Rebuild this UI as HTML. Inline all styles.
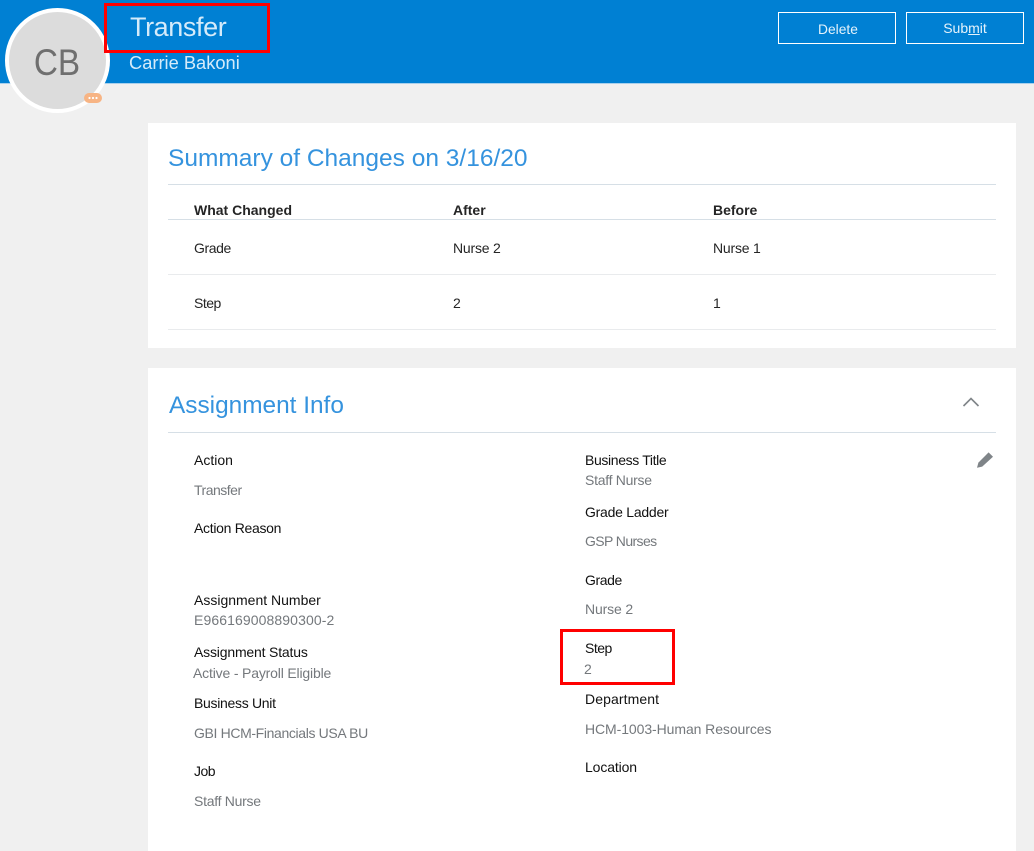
<!DOCTYPE html>
<html><head><meta charset="utf-8">
<style>
html,body{margin:0;padding:0}
body{width:1034px;height:851px;overflow:hidden;position:relative;background:#f0f0f0;font-family:"Liberation Sans",sans-serif;font-size:14px;color:#252525}
.a{position:absolute;white-space:nowrap;line-height:20px}
.box{position:absolute}
.v{color:#74787c}
.l{color:#111}
.hr{position:absolute;height:1px;background:#d6dfe6}
.hr2{position:absolute;height:1px;background:#e9ebed}
.btn{position:absolute;top:12px;width:116px;height:30px;border:1px solid #fff;line-height:33px;text-align:center;color:#e4f2fb;font-size:14px;box-sizing:content-box}
.rb{position:absolute;border:3px solid #f00;box-sizing:border-box}
h2{position:absolute;margin:0;font-weight:normal;line-height:32px;color:#3593de;white-space:nowrap}
</style></head><body>
<div class="box" style="left:0;top:0;width:1034px;height:83px;background:#0080d3;border-bottom:1px solid #a9d0ec"></div>
<div class="box" style="left:5px;top:8px;width:105px;height:105px;border-radius:50%;background:#dcdcdc;border:4px solid #fff;box-sizing:border-box"></div>
<div class="a" style="left:5px;top:41px;width:104px;text-align:center;font-size:37px;line-height:44px;color:#6f6f6f;transform:scaleX(.9)">CB</div>
<div class="box" style="left:84px;top:93px;width:18px;height:10px;border-radius:5px;background:#f7b484"></div>
<svg class="box" style="left:84px;top:93px" width="18" height="10"><circle cx="5.5" cy="5" r="1.1" fill="#fff"/><circle cx="9" cy="5" r="1.1" fill="#fff"/><circle cx="12.5" cy="5" r="1.1" fill="#fff"/></svg>
<div class="a" style="left:130px;top:10px;font-size:27px;line-height:34px;color:#d5ebfa;letter-spacing:-.4px">Transfer</div>
<div class="a" style="left:129px;top:51px;font-size:18.3px;line-height:24px;color:#d5ebfa">Carrie Bakoni</div>
<div class="rb" style="left:104px;top:3px;width:166px;height:50px"></div>
<div class="btn" style="left:778px"><span style="font-size:13.8px;position:relative;left:1px">Delete</span></div>
<div class="btn" style="left:906px"><span style="position:relative;top:-1px;left:0">Sub<u>m</u>it</span></div>

<div class="box" style="left:148px;top:123px;width:868px;height:225px;background:#fff"></div>
<h2 style="left:168px;top:143px;font-size:24.5px">Summary of Changes on 3/16/20</h2>
<div class="hr" style="left:168px;top:184px;width:828px"></div>
<div class="a" style="left:194px;top:200px;font-weight:bold">What Changed</div>
<div class="a" style="left:453px;top:200px;font-weight:bold">After</div>
<div class="a" style="left:713px;top:200px;font-weight:bold">Before</div>
<div class="hr" style="left:168px;top:219px;width:828px"></div>
<div class="a" style="left:194px;top:238px;letter-spacing:-.4px">Grade</div>
<div class="a" style="left:453px;top:238px;letter-spacing:-.2px">Nurse 2</div>
<div class="a" style="left:713px;top:238px;letter-spacing:-.2px">Nurse 1</div>
<div class="hr2" style="left:168px;top:274px;width:828px"></div>
<div class="a" style="left:194px;top:293px;letter-spacing:-.5px">Step</div>
<div class="a" style="left:453px;top:293px">2</div>
<div class="a" style="left:713px;top:293px">1</div>
<div class="hr2" style="left:168px;top:329px;width:828px"></div>

<div class="box" style="left:148px;top:368px;width:868px;height:483px;background:#fff"></div>
<h2 style="left:169px;top:390px;font-size:24.4px">Assignment Info</h2>
<svg class="box" style="left:960px;top:394px" width="22" height="16"><path d="M3.5 12 L11 4.5 L18.5 12" fill="none" stroke="#7f8488" stroke-width="1.6"/></svg>
<div class="hr" style="left:168px;top:432px;width:828px"></div>
<svg class="box" style="left:976px;top:451px" width="18" height="18"><path d="M1 16.8 L2.4 11.6 L12.6 1.4 L17 5.8 L6.2 15.6 Z" fill="#7f8488"/></svg>

<div class="a l" style="left:194px;top:450px">Action</div>
<div class="a v" style="left:194px;top:480px;letter-spacing:-.5px">Transfer</div>
<div class="a l" style="left:194px;top:518px;letter-spacing:-.3px">Action Reason</div>
<div class="a l" style="left:194px;top:590px">Assignment Number</div>
<div class="a v" style="left:194px;top:610px;letter-spacing:.1px">E966169008890300-2</div>
<div class="a l" style="left:194px;top:642px;letter-spacing:-.18px">Assignment Status</div>
<div class="a v" style="left:193px;top:663px;letter-spacing:-.17px">Active - Payroll Eligible</div>
<div class="a l" style="left:194px;top:693px;letter-spacing:-.3px">Business Unit</div>
<div class="a v" style="left:194px;top:723px;letter-spacing:-.36px">GBI HCM-Financials USA BU</div>
<div class="a l" style="left:194px;top:761px;letter-spacing:-.5px">Job</div>
<div class="a v" style="left:194px;top:791px;letter-spacing:-.27px">Staff Nurse</div>

<div class="a l" style="left:585px;top:450px;letter-spacing:-.36px">Business Title</div>
<div class="a v" style="left:585px;top:470px;letter-spacing:-.27px">Staff Nurse</div>
<div class="a l" style="left:585px;top:502px;letter-spacing:-.25px">Grade Ladder</div>
<div class="a v" style="left:585px;top:531px;letter-spacing:-.6px">GSP Nurses</div>
<div class="a l" style="left:585px;top:570px;letter-spacing:-.4px">Grade</div>
<div class="a v" style="left:585px;top:599px;letter-spacing:-.15px">Nurse 2</div>
<div class="a l" style="left:585px;top:638px;letter-spacing:-.5px">Step</div>
<div class="a v" style="left:584px;top:659px">2</div>
<div class="rb" style="left:560px;top:629px;width:115px;height:56px"></div>
<div class="a l" style="left:585px;top:689px;letter-spacing:.1px">Department</div>
<div class="a v" style="left:585px;top:719px;letter-spacing:-.08px">HCM-1003-Human Resources</div>
<div class="a l" style="left:585px;top:757px;letter-spacing:-.12px">Location</div>
</body></html>
